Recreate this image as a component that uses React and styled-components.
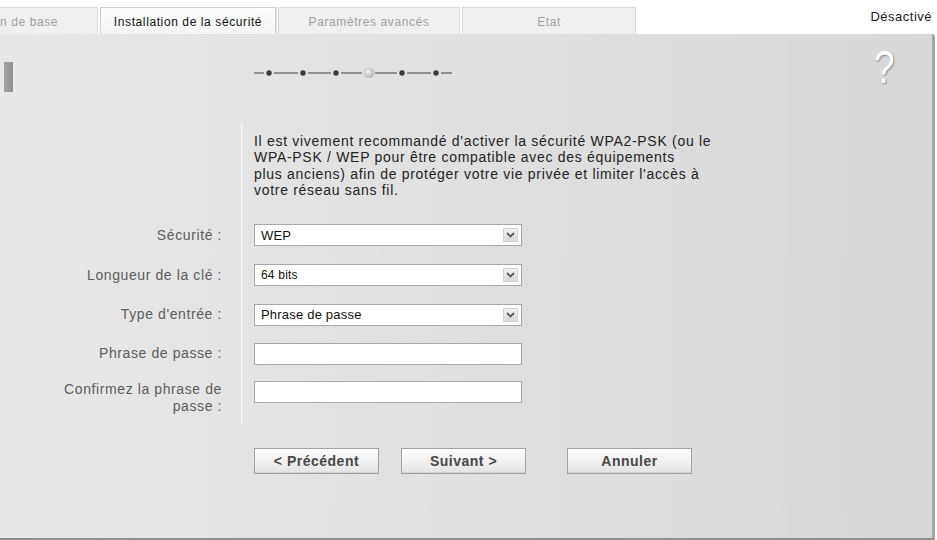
import React from "react";
import styled, { createGlobalStyle } from "styled-components";

const Global = createGlobalStyle`
  html, body { margin: 0; padding: 0; background: #ffffff; }
  body { font-family: "Liberation Sans", Arial, sans-serif; }
  * { box-sizing: border-box; }
`;

const Page = styled.div`
  width: 937px;
  height: 540px;
  display: flex;
  flex-direction: column;
  overflow: hidden;
`;

const TabBar = styled.div`
  height: 34px;
  display: flex;
  align-items: flex-end;
  flex-shrink: 0;
`;

const Tab = styled.div`
  width: ${(p) => p.$w}px;
  height: 27px;
  margin-right: 2px;
  display: flex;
  align-items: center;
  justify-content: ${(p) => (p.$clipped ? "flex-start" : "center")};
  padding-top: 1px;
  font-size: 12px;
  letter-spacing: 0.6px;
  white-space: nowrap;
  color: ${(p) => (p.$active ? "#111" : "#a0a0a0")};
  background: ${(p) => (p.$active ? "linear-gradient(#fdfdfd, #f4f4f4)" : "#f0f0f0")};
  border: 1px solid ${(p) => (p.$active ? "#cfcfcf" : "#dadada")};
  border-left: ${(p) => (p.$clipped ? "none" : "")};
  border-bottom: none;
  box-shadow: ${(p) => (p.$active ? "1px 0 0 #e2e2e2" : "none")};
`;

const Status = styled.div`
  margin-left: auto;
  align-self: flex-start;
  padding-top: 9px;
  padding-right: 5px;
  font-size: 13px;
  letter-spacing: 0.5px;
  color: #1a1a1a;
`;

const Panel = styled.div`
  flex: 1;
  margin-right: 2px;
  display: flex;
  flex-direction: column;
  background: linear-gradient(to right, #e8e8e8 0%, #e0e0e0 50%, #d8d8d8 100%);
  border-right: 3px solid #a6a6a6;
  border-bottom: 2px solid #8e8e8e;
  border-top-right-radius: 3px;
`;

const Header = styled.div`
  height: 89px;
  display: grid;
  grid-template-columns: 241px 1fr;
`;

const LeftMark = styled.div`
  margin: 28px 0 0 4px;
  width: 9px;
  height: 30px;
  background: linear-gradient(to right, #a3a3a3, #8f8f8f);
`;

const HeaderMain = styled.div`
  display: flex;
  justify-content: space-between;
  align-items: flex-start;
  padding-left: 12px;
  padding-right: 37px;
`;

const Steps = styled.svg`
  margin-top: 34px;
  display: block;
`;

const Help = styled.div`
  margin-top: 10px;
  font-size: 46px;
  line-height: 46px;
  color: #ffffff;
  text-shadow: 1px 1px 2px #878787;
  font-family: "Liberation Sans", Arial, sans-serif;
  transform: scaleX(0.8);
  transform-origin: right center;
`;

const Form = styled.div`
  display: grid;
  grid-template-columns: 241px 500px;
  grid-template-rows: 92px 40px 40px 39px 39px 52px;
`;

const LabelCell = styled.div`
  display: flex;
  align-items: ${(p) => (p.$top ? "flex-start" : "center")};
  justify-content: flex-end;
  text-align: right;
  padding-right: 19px;
  padding-top: ${(p) => (p.$top ? "8px" : "0")};
  font-size: 14px;
  letter-spacing: 0.6px;
  line-height: 17px;
  color: #5c5c5c;
`;

const FieldCell = styled.div`
  display: flex;
  align-items: ${(p) => (p.$top ? "flex-start" : "center")};
  padding-left: 12px;
  padding-top: ${(p) => (p.$top ? "8px" : "0")};
  border-left: 1px solid #f7f7f7;
`;

const Intro = styled.p`
  margin: 0;
  padding-top: 2px;
  font-size: 14px;
  letter-spacing: 0.7px;
  line-height: 16.3px;
  color: #222;
  white-space: nowrap;
  align-self: flex-start;
`;

const SelectWrap = styled.div`
  position: relative;
  width: 268px;
  height: 22px;
`;

const Select = styled.select`
  appearance: none;
  -webkit-appearance: none;
  width: 100%;
  height: 100%;
  margin: 0;
  padding: 0 0 0 6px;
  border: 1px solid #a7a7a7;
  border-radius: 0;
  background: #ffffff;
  font-family: "Liberation Sans", Arial, sans-serif;
  font-size: ${(p) => p.$fs || 13}px;
  letter-spacing: 0.2px;
  color: #111;
  outline: none;
`;

const Chevron = styled.span`
  position: absolute;
  right: 4px;
  top: 4px;
  width: 15px;
  height: 14px;
  display: flex;
  align-items: center;
  justify-content: center;
  background: linear-gradient(#f1f1f1, #d9d9d9);
  border: 1px solid #d2d2d2;
  pointer-events: none;
`;

const TextInput = styled.input`
  width: 268px;
  height: 22px;
  margin: 0;
  padding: 0 6px;
  border: 1px solid #a7a7a7;
  background: #ffffff;
  font-family: "Liberation Sans", Arial, sans-serif;
  font-size: 13px;
  outline: none;
`;

const Buttons = styled.div`
  display: flex;
  padding-left: 254px;
  margin-top: 23px;
`;

const Button = styled.button`
  width: 125px;
  height: 26px;
  margin: 0 ${(p) => p.$gap || 0}px 0 0;
  padding: 0;
  border: 1px solid #a2a2a2;
  background: linear-gradient(#fdfdfd 0%, #efefef 60%, #e3e3e3 100%);
  box-shadow: inset 0 -1px 0 #d2d2d2;
  font-family: "Liberation Sans", Arial, sans-serif;
  font-size: 14px;
  letter-spacing: 0.5px;
  font-weight: bold;
  color: #474747;
  cursor: pointer;
`;

function ChevronIcon() {
  return (
    <svg width="9" height="6" viewBox="0 0 9 6">
      <path d="M1 1 L4.5 4.5 L8 1" fill="none" stroke="#5a5a5a" strokeWidth="1.8" />
    </svg>
  );
}

function SelectBox({ value, fs }) {
  return (
    <SelectWrap>
      <Select value={value} $fs={fs} onChange={() => {}}>
        <option>{value}</option>
      </Select>
      <Chevron>
        <ChevronIcon />
      </Chevron>
    </SelectWrap>
  );
}

function StepIndicator() {
  const dots = [16, 50, 83, 149, 183];
  const segs = [
    [1, 11],
    [21, 45],
    [55, 78],
    [88, 109],
    [122, 144],
    [154, 178],
    [188, 199],
  ];
  return (
    <Steps width="202" height="10" viewBox="0 0 202 10">
      {segs.map(([a, b]) => (
        <line key={a} x1={a} y1="5" x2={b} y2="5" stroke="#7c7c7c" strokeWidth="1.6" />
      ))}
      {dots.map((x) => (
        <circle key={x} cx={x} cy="5" r="2.7" fill="#3a3a3a" />
      ))}
      <defs>
        <radialGradient id="cur" cx="40%" cy="35%" r="70%">
          <stop offset="0%" stopColor="#f4f4f4" />
          <stop offset="100%" stopColor="#b0b0b0" />
        </radialGradient>
      </defs>
      <circle cx="116" cy="5" r="5" fill="url(#cur)" stroke="#c0c0c0" strokeWidth="0.6" />
    </Steps>
  );
}

export default function App() {
  return (
    <Page>
      <Global />
      <TabBar>
        <Tab $w={98} $clipped>n de base</Tab>
        <Tab $w={176} $active>Installation de la sécurité</Tab>
        <Tab $w={182}>Paramètres avancés</Tab>
        <Tab $w={174}>Etat</Tab>
        <Status>Désactivé</Status>
      </TabBar>
      <Panel>
        <Header>
          <div>
            <LeftMark />
          </div>
          <HeaderMain>
            <StepIndicator />
            <Help>?</Help>
          </HeaderMain>
        </Header>
        <Form>
          <LabelCell />
          <FieldCell $top>
            <Intro>
              Il est vivement recommandé d'activer la sécurité WPA2-PSK (ou le
              <br />
              WPA-PSK / WEP pour être compatible avec des équipements
              <br />
              plus anciens) afin de protéger votre vie privée et limiter l'accès à
              <br />
              votre réseau sans fil.
            </Intro>
          </FieldCell>

          <LabelCell>Sécurité :</LabelCell>
          <FieldCell>
            <SelectBox value="WEP" />
          </FieldCell>

          <LabelCell>Longueur de la clé :</LabelCell>
          <FieldCell>
            <SelectBox value="64 bits" fs={12} />
          </FieldCell>

          <LabelCell>Type d'entrée :</LabelCell>
          <FieldCell>
            <SelectBox value="Phrase de passe" />
          </FieldCell>

          <LabelCell>Phrase de passe :</LabelCell>
          <FieldCell>
            <TextInput type="password" />
          </FieldCell>

          <LabelCell $top>
            Confirmez la phrase de
            <br />
            passe :
          </LabelCell>
          <FieldCell $top>
            <TextInput type="password" />
          </FieldCell>
        </Form>
        <Buttons>
          <Button $gap={22}>&lt; Précédent</Button>
          <Button $gap={41}>Suivant &gt;</Button>
          <Button>Annuler</Button>
        </Buttons>
      </Panel>
    </Page>
  );
}
